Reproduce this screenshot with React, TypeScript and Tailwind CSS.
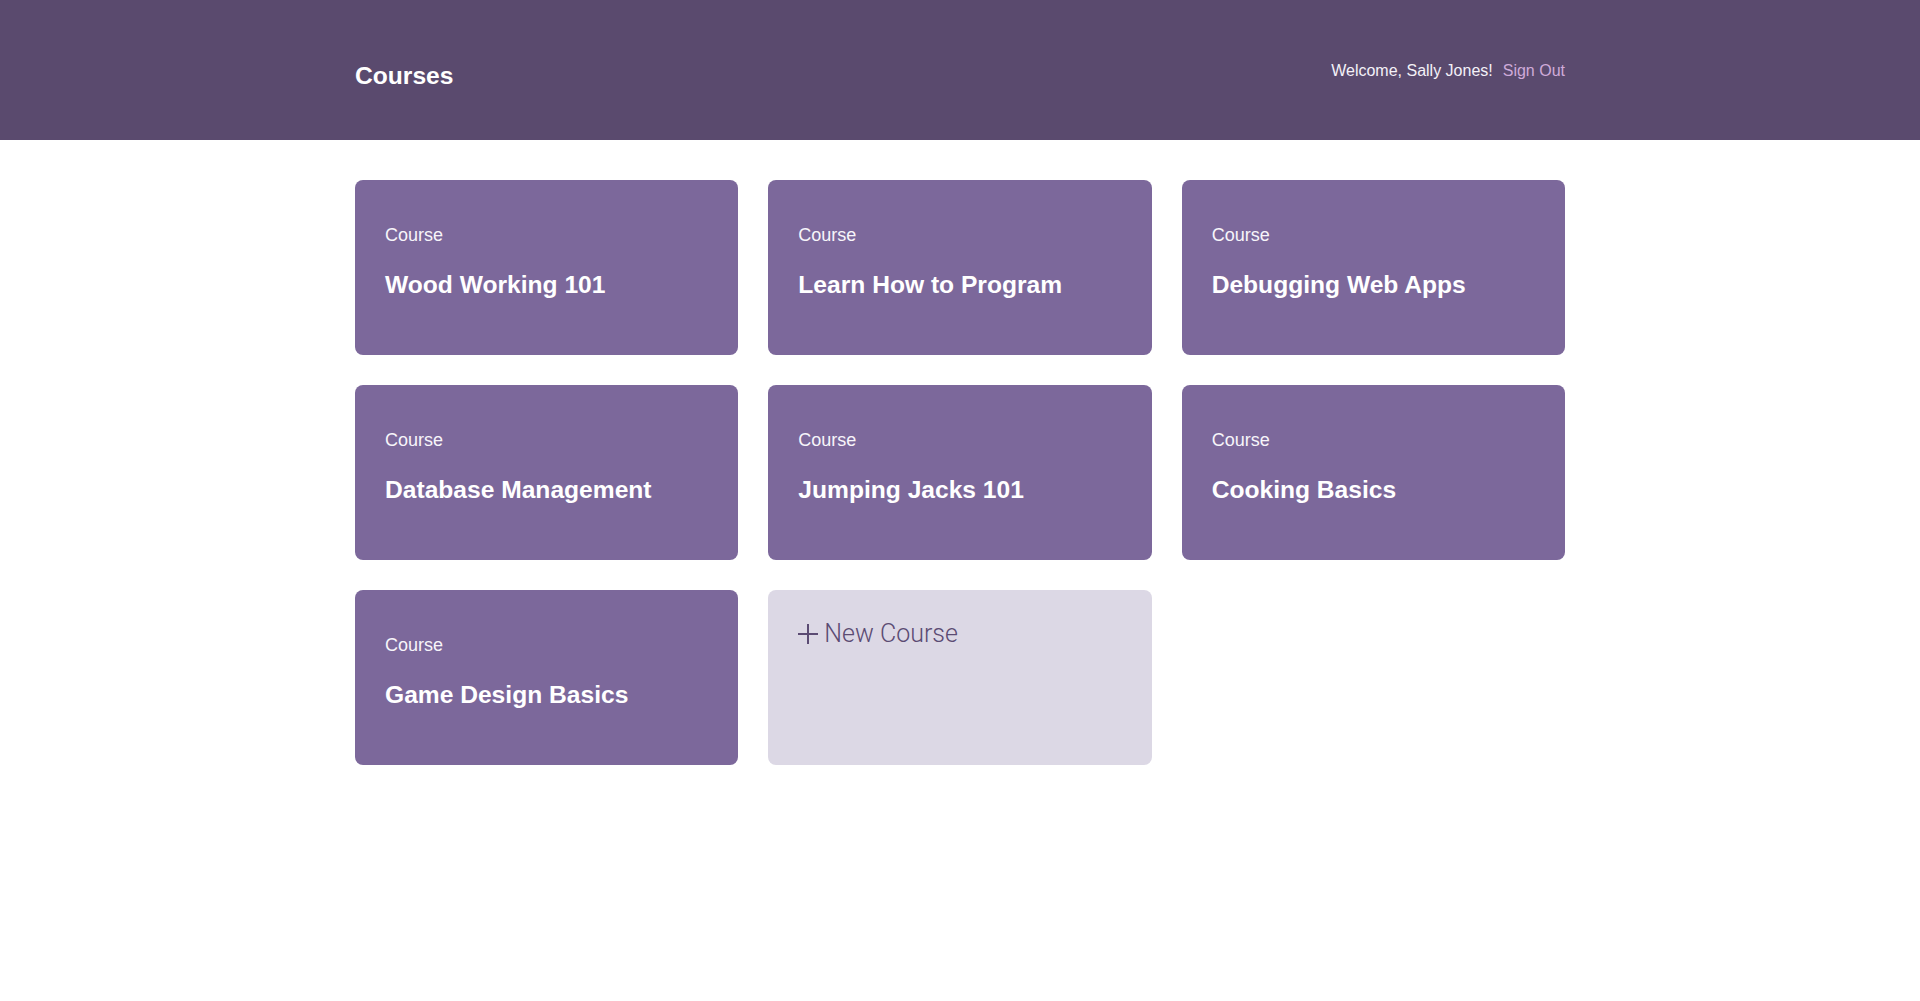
import React from "react";

interface Course {
  id: number;
  title: string;
}

const courses: Course[] = [
  { id: 1, title: "Wood Working 101" },
  { id: 2, title: "Learn How to Program" },
  { id: 3, title: "Debugging Web Apps" },
  { id: 4, title: "Database Management" },
  { id: 5, title: "Jumping Jacks 101" },
  { id: 6, title: "Cooking Basics" },
  { id: 7, title: "Game Design Basics" },
];

const font = { fontFamily: '"Liberation Sans", Arial, sans-serif' };

const Header: React.FC = () => (
  <header className="bg-[#5a4a6e] h-[140px]">
    <div className="mx-auto w-[1210px] h-full flex items-center justify-between">
      <h1 className="pt-[12px] text-[24.6px] leading-[30px] font-bold text-white">
        Courses
      </h1>
      <div className="pt-[2px] flex items-center gap-[10px] text-[16px] leading-[20px]">
        <span className="text-[#f4f1f8]">Welcome, Sally Jones!</span>
        <a href="#" className="text-[#cfaad9]">
          Sign Out
        </a>
      </div>
    </div>
  </header>
);

const CourseCard: React.FC<{ course: Course }> = ({ course }) => (
  <a
    href="#"
    className="block h-[175px] rounded-[8px] bg-[#7c689b] px-[30px] pt-[43px] text-white"
  >
    <h4 className="text-[18px] leading-[24px] text-[#f7f5fa]">Course</h4>
    <h3 className="mt-[23px] text-[24.6px] leading-[30px] font-bold">
      {course.title}
    </h3>
  </a>
);

const NewCourseCard: React.FC = () => (
  <a
    href="#"
    className="block h-[175px] rounded-[8px] bg-[#dcd8e5] px-[30px] pt-[29px] text-[#5b4b73]"
  >
    <div className="flex items-center gap-[6px]">
      <svg width="20" height="20" viewBox="0 0 20 20" className="shrink-0">
        <path d="M10 0v20M0 10h20" stroke="#5b4b73" strokeWidth="2" />
      </svg>
      <span
        className="text-[25px] leading-[30px] font-light"
        style={{ fontFamily: 'Roboto, "Liberation Sans", sans-serif' }}
      >
        New Course
      </span>
    </div>
  </a>
);

export default function App() {
  return (
    <div className="min-h-screen bg-white" style={font}>
      <Header />
      <main className="mx-auto w-[1210px] pt-[40px] grid grid-cols-3 gap-[30px]">
        {courses.map((c) => (
          <CourseCard key={c.id} course={c} />
        ))}
        <NewCourseCard />
      </main>
    </div>
  );
}
